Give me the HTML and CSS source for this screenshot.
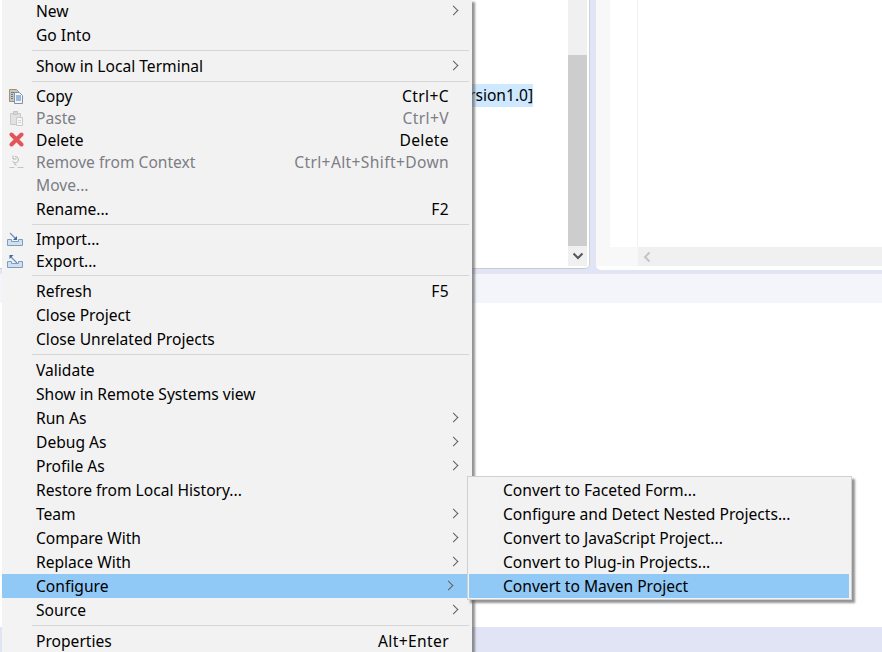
FILE: index.html
```html
<html>
<head>
<meta charset="UTF-8">
<link rel="stylesheet" href="styles.css">
</head>
<body>
<div class="workbench">
    <div class="top_row">
        <div class="explorer">
            <div class="explorer_body">
                <span class="selected_text">rsion1.0]</span>
            </div>
            <div class="vscroll">
                <div class="vscroll_thumb"></div>
                <div class="vscroll_btn">
                    <svg width="12" height="8" viewBox="0 0 12 8"><path d="M1.500 1.500 L6 6 L10.500 1.500" fill="none" stroke="#555" stroke-width="2"/></svg>
                </div>
            </div>
        </div>
        <div class="editor">
            <div class="editor_main">
                <div class="ruler"></div>
                <div class="lines"></div>
                <div class="text_area"></div>
            </div>
            <div class="hscroll">
                <div class="hscroll_corner"></div>
                <div class="hscroll_bar">
                    <svg width="8" height="12" viewBox="0 0 8 12"><path d="M6.500 1.500 L2 6 L6.500 10.500" fill="none" stroke="#c4c4c4" stroke-width="2"/></svg>
                </div>
            </div>
        </div>
    </div>
    <div class="tab_strip"></div>
    <div class="view_body"></div>
    <div class="status_strip"></div>
</div>

<div class="menu main_menu">
    <div class="item arrow"><span class="label">New</span></div>
    <div class="item"><span class="label">Go Into</span></div>
    <div class="sep"></div>
    <div class="item arrow"><span class="label">Show in Local Terminal</span></div>
    <div class="sep"></div>
    <div class="item short">
        <svg class="icon" viewBox="0 0 16 16"><path d="M1.500 1.500h7l2 2v2H6.500v8h-5z" fill="#cfc7b0" stroke="#9a9178"/><path d="M6.500 4.500h5l3 3v8h-8z" fill="#f2f6fb" stroke="#7d93ad"/><path d="M8 8h5M8 10h5M8 12h5M3 4.500h3M3 6.500h2M3 8.500h2M3 10.500h2" stroke="#4a7db5"/></svg>
        <span class="label">Copy</span><span class="key">Ctrl+C</span>
    </div>
    <div class="item short off">
        <svg class="icon" viewBox="0 0 16 16"><path d="M2.500 3.500h10v11h-10z" fill="#e2e2e2" stroke="#cacaca"/><path d="M5.500 1.500h4v3h-4z" fill="#d6d6d6" stroke="#c4c4c4"/><path d="M8.500 7.500h6v8h-6z" fill="#f6f6f6" stroke="#cacaca"/><path d="M10 10.500h3M10 12.500h3" stroke="#d4d4d4"/></svg>
        <span class="label">Paste</span><span class="key">Ctrl+V</span>
    </div>
    <div class="item short">
        <svg class="icon" viewBox="0 0 16 16"><path d="M3.500 2.500 L13.500 12.500 M13.500 2.500 L3.500 12.500" fill="none" stroke="#e4555a" stroke-width="4" stroke-linecap="round"/></svg>
        <span class="label">Delete</span><span class="key">Delete</span>
    </div>
    <div class="item short off">
        <svg class="icon" viewBox="0 0 16 16"><path d="M7 2.500a3.200 3.200 0 1 1-2.500 4.800M5 1.500v3.500h3.500M6 9.500l2.500 2" fill="none" stroke="#b4b4b4"/><path d="M1.500 13.500h5M9.500 13.500h6" stroke="#c4c4c4"/></svg>
        <span class="label">Remove from Context</span><span class="key">Ctrl+Alt+Shift+Down</span>
    </div>
    <div class="item off"><span class="label">Move...</span></div>
    <div class="item"><span class="label">Rename...</span><span class="key">F2</span></div>
    <div class="sep"></div>
    <div class="item short">
        <svg class="icon tray" viewBox="0 0 16 16"><path d="M.500 8.500h4v2h7v-2h4v6H.500z" fill="#cfe0f0" stroke="#7f9cbc"/><path d="M3 2 L9 8" stroke="#6b93bd" stroke-width="1.200"/><path d="M6 9h4V5z" fill="#3d6a99"/></svg>
        <span class="label">Import...</span>
    </div>
    <div class="item short">
        <svg class="icon tray" viewBox="0 0 16 16"><path d="M.500 8.500h4v2h7v-2h4v6H.500z" fill="#cfe0f0" stroke="#7f9cbc"/><path d="M4 4 L10 10" stroke="#6b93bd" stroke-width="1.200"/><path d="M2.500 2h4l-4 4z" fill="#3d6a99"/></svg>
        <span class="label">Export...</span>
    </div>
    <div class="sep"></div>
    <div class="item"><span class="label">Refresh</span><span class="key">F5</span></div>
    <div class="item"><span class="label">Close Project</span></div>
    <div class="item"><span class="label">Close Unrelated Projects</span></div>
    <div class="sep"></div>
    <div class="item"><span class="label">Validate</span></div>
    <div class="item"><span class="label">Show in Remote Systems view</span></div>
    <div class="item arrow"><span class="label">Run As</span></div>
    <div class="item arrow"><span class="label">Debug As</span></div>
    <div class="item arrow"><span class="label">Profile As</span></div>
    <div class="item"><span class="label">Restore from Local History...</span></div>
    <div class="item arrow"><span class="label">Team</span></div>
    <div class="item arrow"><span class="label">Compare With</span></div>
    <div class="item arrow"><span class="label">Replace With</span></div>
    <div class="item arrow active"><span class="label">Configure</span></div>
    <div class="item arrow"><span class="label">Source</span></div>
    <div class="sep"></div>
    <div class="item"><span class="label">Properties</span><span class="key">Alt+Enter</span></div>
</div>

<div class="menu sub_menu">
    <div class="item"><span class="label">Convert to Faceted Form...</span></div>
    <div class="item"><span class="label">Configure and Detect Nested Projects...</span></div>
    <div class="item"><span class="label">Convert to JavaScript Project...</span></div>
    <div class="item"><span class="label">Convert to Plug-in Projects...</span></div>
    <div class="item active"><span class="label">Convert to Maven Project</span></div>
</div>
</body>
</html>
```

FILE: styles.css
```css
html, body {
    margin: 0;
    padding: 0;
    width: 882px;
    height: 652px;
    overflow: hidden;
    background: #ffffff;
    font-family: "Noto Sans", sans-serif;
    font-size: 15.6px;
    color: #000000;
}

/* the workbench behind the menus */
.workbench {
    display: flex;
    flex-direction: column;
    height: 652px;
}

.top_row {
    display: flex;
    height: 270px;
    background: #e0e4f5;
}

.explorer {
    display: flex;
    width: 590px;
    height: 269px;
    background: #ffffff;
    border-right: 1px solid #d0d2da;
    border-bottom: 1px solid #c8cad2;
    border-bottom-right-radius: 5px;
    box-sizing: border-box;
}

.explorer_body {
    flex: 1;
    padding-top: 84px;
    padding-left: 469px;
}

.selected_text {
    display: block;
    width: 64px;
    height: 23px;
    line-height: 23px;
    background: #cde8ff;
    white-space: nowrap;
}

.vscroll {
    display: flex;
    flex-direction: column;
    justify-content: flex-end;
    width: 19px;
    margin-right: 2px;
    height: 266px;
    background: #f0f0f0;
}

.vscroll_thumb {
    height: 191px;
    background: #cdcdcd;
}

.vscroll_btn {
    display: flex;
    align-items: center;
    justify-content: center;
    height: 20px;
}

.editor {
    display: flex;
    flex-direction: column;
    width: 286px;
    margin-left: 6px;
    height: 270px;
    background: #ffffff;
    border-bottom-left-radius: 5px;
    overflow: hidden;
}

.editor_main {
    display: flex;
    height: 247px;
}

.ruler {
    width: 14px;
    background: #f8f8f8;
}

.lines {
    width: 27px;
    background: #ffffff;
    border-right: 1px solid #f2f2f2;
}

.text_area {
    flex: 1;
}

.hscroll {
    display: flex;
    height: 19px;
}

.hscroll_corner {
    width: 42px;
    background: #f8f8f8;
}

.hscroll_bar {
    flex: 1;
    display: flex;
    align-items: center;
    padding-left: 5px;
    background: #f0f0f0;
}

.tab_strip {
    height: 33px;
    background: #f3f5fb;
    border-top: 4px solid #e0e4f5;
    box-sizing: border-box;
}

.view_body {
    height: 324px;
}

.status_strip {
    height: 25px;
    background: #e0e4f5;
}

/* context menus */
.menu {
    position: absolute;
    background: linear-gradient(to right, #f3f3f3 30px, #f2f2f2 30px);
    box-shadow: 3px 3px 2px rgba(90, 90, 90, 0.65);
}

.main_menu {
    left: 2px;
    top: -1px;
    width: 470px;
}

.sub_menu {
    left: 467px;
    top: 476px;
    width: 385px;
    box-sizing: border-box;
    padding: 1px 2px 1px 1px;
    border: 1px solid #d0d0d0;
}

.item {
    display: flex;
    align-items: center;
    position: relative;
    height: 24px;
    padding-left: 34px;
    padding-right: 23px;
    white-space: nowrap;
}

.sub_menu .item {
    padding-right: 0;
}

.item.short {
    height: 22px;
}

.item.off {
    color: #7d7d85;
}

.item.active {
    background: #90c8f6;
}

.main_menu .item.active {
    margin-right: 5px;
}

.label {
    flex: 1;
}

.key {
    letter-spacing: 0.36px;
}

.item.arrow::after {
    content: "";
    position: absolute;
    right: 15px;
    top: 8px;
    width: 6px;
    height: 6px;
    border-top: 1px solid #606060;
    border-right: 1px solid #606060;
    transform: rotate(45deg);
}

.icon {
    position: absolute;
    left: 6px;
    top: 3px;
    width: 16px;
    height: 16px;
}

.icon.tray {
    left: 5px;
}

.sep {
    height: 1px;
    margin: 3px 3px 3px 30px;
    background: #d6d6d6;
}
```
